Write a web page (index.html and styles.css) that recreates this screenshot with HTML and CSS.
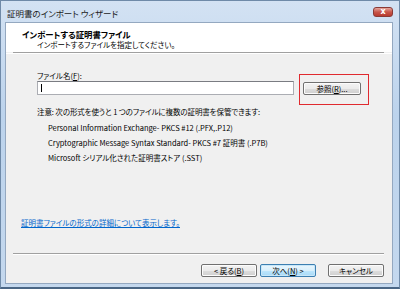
FILE: index.html
```html
<!DOCTYPE html>
<html lang="ja">
<head>
    <meta charset="UTF-8">
    <title>証明書のインポート ウィザード</title>
    <link rel="stylesheet" href="styles.css">
</head>
<body>
    <div class="window">
        <div class="titlebar">
            <span class="title">証明書のインポート ウィザード</span>
            <span class="close">x</span>
        </div>
        <div class="client">
            <div class="header">
                <div class="heading">インポートする証明書ファイル</div>
                <div class="subheading">インポートするファイルを指定してください。</div>
            </div>
            <div class="separator"></div>
            <div class="main">
                <div class="fields">
                    <div class="label">ファイル名(<u>F</u>):</div>
                    <div class="file-row">
                        <div class="textbox"><span class="caret"></span></div>
                        <span class="browse-wrap">
                            <button type="button" class="btn browse">参照(<u>R</u>)...</button>
                            <span class="highlight"></span>
                        </span>
                    </div>
                    <div class="note">注意: 次の形式を使うと 1 つのファイルに複数の証明書を保管できます:</div>
                    <ul class="formats">
                        <li>Personal Information Exchange- PKCS #12 (.PFX,.P12)</li>
                        <li>Cryptographic Message Syntax Standard- PKCS #7 証明書 (.P7B)</li>
                        <li>Microsoft シリアル化された証明書ストア (.SST)</li>
                    </ul>
                </div>
                <a class="link" href="#">証明書ファイルの形式の詳細について表示します。</a>
            </div>
            <div class="separator"></div>
            <div class="footer">
                <button type="button" class="btn">&lt; 戻る(<u>B</u>)</button>
                <button type="button" class="btn default">次へ(<u>N</u>) &gt;</button>
                <button type="button" class="btn cancel">キャンセル</button>
            </div>
        </div>
    </div>
</body>
</html>
```

FILE: styles.css
```css
body {
    margin: 0;
    padding: 0;
    font-family: "Noto Sans CJK JP", "Liberation Sans", sans-serif;
    font-feature-settings: "palt";
    font-size: 7.5px;
    color: #000;
}
.window {
    width: 400px;
    height: 289px;
    box-sizing: border-box;
    background: linear-gradient(to bottom, #d3e2f3, #bcd3ec 40%, #c4d8ee);
    border: 1px solid #6f8aa8;
    border-bottom: 2px solid #4a6685;
    display: flex;
    flex-direction: column;
}
.titlebar {
    height: 21px;
    display: flex;
    align-items: center;
    justify-content: space-between;
    padding: 0 6px 0 6px;
}
.title {
    font-size: 8.5px;
    color: #1b1b1b;
    margin-top: 2px;
}
.close {
    width: 20px;
    height: 10px;
    margin-top: 1px;
    box-sizing: border-box;
    border: 1px solid #8a3a36;
    border-radius: 3px;
    background: linear-gradient(to bottom, #e5a69d, #c8564a 50%, #b83a2f);
    color: #fff;
    font-family: "DejaVu Sans", sans-serif;
    font-weight: bold;
    font-size: 8px;
    line-height: 7px;
    text-align: center;
}
.client {
    margin: 0 6px 0 4px;
    height: 262px;
    background: #f0f0f0;
    border: 1px solid #94a8c0;
    box-sizing: border-box;
    display: flex;
    flex-direction: column;
}
.header {
    background: #fff;
    height: 29px;
    padding-left: 16px;
    box-sizing: border-box;
}
.heading {
    font-weight: bold;
    font-size: 8.4px;
    line-height: 10px;
    margin-top: 6px;
}
.subheading {
    line-height: 10px;
    margin-top: 1px;
    padding-left: 15px;
}
.separator {
    height: 0;
    border-top: 1px solid #a0a0a0;
    border-bottom: 1px solid #fff;
    margin: 0 8px 0 7px;
}
.header + .separator {
    margin: 0;
    padding: 0 8px 0 7px;
    border-top: 0;
    height: 1px;
    background-clip: content-box;
    background-color: #a0a0a0;
    border-bottom: 1px solid #fff;
}
.main {
    flex: 1;
    padding-left: 15px;
}
.fields {
    padding-left: 16px;
}
.label {
    line-height: 10px;
    margin-top: 17px;
}
.file-row {
    display: flex;
    align-items: center;
    gap: 9px;
}
.textbox {
    width: 257px;
    height: 14px;
    box-sizing: border-box;
    background: #fff;
    border: 1px solid #abadb3;
    border-top-color: #7a7c82;
    padding: 2px 3px;
}
.caret {
    display: block;
    width: 1px;
    height: 8px;
    background: #000;
}
.browse-wrap {
    position: relative;
    display: flex;
}
.highlight {
    position: absolute;
    left: -4px;
    right: -8px;
    top: -8px;
    bottom: -10px;
    border: 1px solid #e02a2f;
}
.btn {
    font-family: inherit;
    font-feature-settings: "palt";
    font-size: 7.5px;
    color: #000;
    width: 56px;
    height: 13px;
    padding: 0;
    line-height: 11px;
    border: 1px solid #707070;
    border-radius: 2px;
    background: linear-gradient(to bottom, #f3f3f3, #ebebeb 50%, #dddddd 51%, #cfcfcf);
    box-shadow: inset 0 0 0 1px #fcfcfc;
}
.browse {
    width: 58px;
}
.btn.default {
    border-color: #3c7fb1;
    background: linear-gradient(to bottom, #eaf6fd, #d9f0fc 50%, #bee6fd 51%, #a7d9f5);
    box-shadow: inset 0 0 0 1px #c8e7f9;
}
.note {
    line-height: 10px;
    margin-top: 12px;
    letter-spacing: -0.1px;
}
.formats {
    list-style: none;
    margin: 3px 0 0;
    padding: 0 0 0 11px;
}
.formats li {
    line-height: 15px;
}
.link {
    display: inline-block;
    margin-top: 53px;
    line-height: 10px;
    color: #0066cc;
    text-decoration: underline;
}
.footer {
    height: 28px;
    display: flex;
    align-items: flex-start;
    justify-content: flex-end;
    padding: 9px 8px 0 0;
    box-sizing: border-box;
}
.footer .btn + .btn {
    margin-left: 3px;
}
.footer .cancel {
    margin-left: 12px !important;
}
```
